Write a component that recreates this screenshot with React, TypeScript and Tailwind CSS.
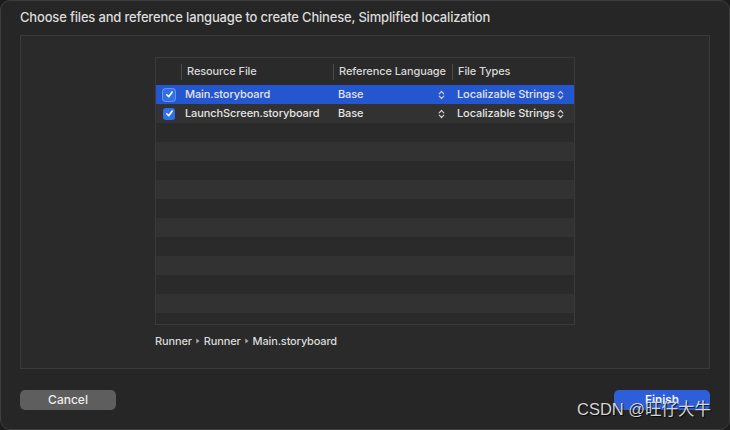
import React from "react";

const Updown = () => (
  <svg width="7" height="10" viewBox="0 0 7 10" fill="none" stroke="currentColor" strokeWidth="1.2" strokeLinecap="round" strokeLinejoin="round">
    <path d="M1.2 3.8 L3.5 1.5 L5.8 3.8" />
    <path d="M1.2 6.2 L3.5 8.5 L5.8 6.2" />
  </svg>
);

const Tri = () => (
  <svg width="4" height="6" viewBox="0 0 4 6" fill="#a8a8a8">
    <path d="M0.3 0.6 L3.6 3 L0.3 5.4 Z" />
  </svg>
);

const Check = ({ selected }: { selected?: boolean }) => (
  <div
    className={`flex h-[12px] w-[12px] items-center justify-center rounded-[3px] bg-[#2f6fe8] ${
      selected ? "ring-1 ring-[#6d93e6]" : ""
    }`}
  >
    <svg width="9" height="9" viewBox="0 0 9 9" fill="none" stroke="white" strokeWidth="1.6" strokeLinecap="round" strokeLinejoin="round">
      <path d="M1.8 4.8 L3.7 6.7 L7.2 2" />
    </svg>
  </div>
);

type Row = { name: string; selected?: boolean } | null;

export default function App() {
  const rows: Row[] = [
    { name: "Main.storyboard", selected: true },
    { name: "LaunchScreen.storyboard" },
    null, null, null, null, null, null, null, null, null, null, null,
  ];
  return (
    <div
      className="relative h-[430px] w-[730px] overflow-hidden bg-[#1c1c1c] text-[#dedede]"
      style={{ fontFamily: "Inter, 'Liberation Sans', 'Noto Sans CJK SC', sans-serif" }}
    >
      <div className="flex h-full flex-col rounded-[10px] border border-[#3d3d3d] bg-[#262626] px-[19px]">
        <div className="flex h-[34px] items-center text-[13px] font-medium tracking-[-0.18px] text-[#dcdcdc]">
          Choose files and reference language to create Chinese, Simplified localization
        </div>
        <div className="flex h-[334px] flex-col items-center border border-[#3b3b3b] bg-[#2a2a2a] pt-[21px]">
          <div className="flex h-[268px] w-[420px] flex-col overflow-hidden border border-[#3a3a3a] bg-[#2a2a2a]">
            <div className="flex h-[27px] shrink-0 items-center text-[11px] font-medium tracking-[-0.1px] text-[#d8d8d8]">
              <div className="w-[25px]" />
              <div className="flex w-[152px] items-center">
                <div className="h-[16px] w-px bg-[#4a4a4a]" />
                <span className="pl-[5px]">Resource File</span>
              </div>
              <div className="flex w-[119px] items-center">
                <div className="h-[16px] w-px bg-[#4a4a4a]" />
                <span className="pl-[5px]">Reference Language</span>
              </div>
              <div className="flex w-[122px] items-center">
                <div className="h-[16px] w-px bg-[#4a4a4a]" />
                <span className="pl-[5px]">File Types</span>
              </div>
            </div>
            {rows.map((r, i) => {
              const bg = r && r.selected ? "bg-[#2456cf]" : i % 2 === 1 ? "bg-[#323232]" : "bg-[#2a2a2a]";
              return (
                <div key={i} className={`flex h-[19px] shrink-0 items-center text-[11px] font-medium tracking-[-0.1px] text-[#e4e4e4] ${bg}`}>
                  {r && (
                    <>
                      <div className="flex w-[25px] justify-center pl-[1px]">
                        <Check selected={r.selected} />
                      </div>
                      <div className="w-[152px] pl-[4px]">{r.name}</div>
                      <div className="flex w-[119px] items-center justify-between pl-[5px] pr-[7px]">
                        <span>Base</span>
                        <span className="text-[#cfcfcf]"><Updown /></span>
                      </div>
                      <div className="flex w-[122px] items-center gap-[2px] pl-[5px]">
                        <span>Localizable Strings</span>
                        <span className="text-[#cfcfcf]"><Updown /></span>
                      </div>
                    </>
                  )}
                </div>
              );
            })}
          </div>
          <div className="mt-[9px] flex h-[14px] w-[420px] items-center text-[11px] font-medium tracking-[-0.15px] text-[#dadada]">
            <span>Runner</span>
            <span className="mx-[4px] flex items-center"><Tri /></span>
            <span>Runner</span>
            <span className="mx-[4px] flex items-center"><Tri /></span>
            <span>Main.storyboard</span>
          </div>
        </div>
        <div className="mt-[21px] flex justify-between">
          <div className="flex h-[20px] w-[96px] items-center justify-center rounded-[5px] bg-[#5e5e5e] text-[12px] font-medium text-[#ececec]">
            Cancel
          </div>
          <div className="flex h-[20px] w-[96px] items-center justify-center rounded-[5px] bg-[#2e5fd8] text-[12px] font-medium text-white">
            Finish
          </div>
        </div>
      </div>
      <div
        className="absolute left-[577px] top-[398px] text-[16.5px] leading-[22px] text-[#d4d4d4]"
        style={{ textShadow: "1px 1px 1px rgba(0,0,0,0.8)", fontFamily: "'Liberation Sans', 'Noto Sans CJK SC', sans-serif" }}
      >
        CSDN @旺仔大牛
      </div>
    </div>
  );
}
